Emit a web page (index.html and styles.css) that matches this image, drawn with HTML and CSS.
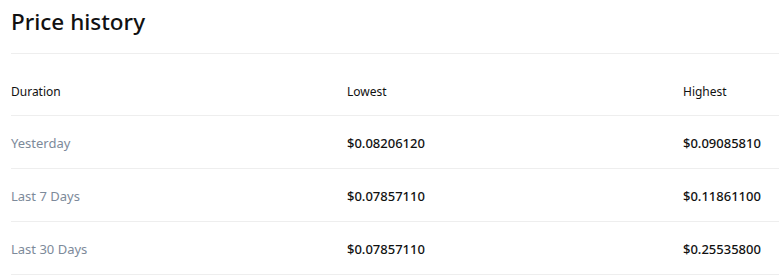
FILE: index.html
```html
<!DOCTYPE html>
<html>
<head>
<meta charset="utf-8">
<link rel="stylesheet" href="styles.css">
</head>
<body>
<section class="card">
  <h2 class="title">Price history</h2>
  <div class="table">
    <div class="row head">
      <div class="cell">Duration</div>
      <div class="cell">Lowest</div>
      <div class="cell">Highest</div>
    </div>
    <div class="row">
      <div class="cell label">Yesterday</div>
      <div class="cell val">$0.08206120</div>
      <div class="cell val">$0.09085810</div>
    </div>
    <div class="row">
      <div class="cell label">Last 7 Days</div>
      <div class="cell val">$0.07857110</div>
      <div class="cell val">$0.11861100</div>
    </div>
    <div class="row">
      <div class="cell label">Last 30 Days</div>
      <div class="cell val">$0.07857110</div>
      <div class="cell val">$0.25535800</div>
    </div>
  </div>
</section>
</body>
</html>
```
FILE: styles.css
```css
html, body {
  margin: 0;
  padding: 0;
  background: #fff;
}
body {
  font-family: "Noto Sans", "Open Sans", sans-serif;
  color: #111;
  overflow: hidden;
}
.card {
  box-sizing: border-box;
  padding-left: 11px;
  width: 100%;
}
.title {
  margin: 0;
  padding-top: 6px;
  padding-bottom: 15px;
  font-size: 22.5px;
  line-height: 32px;
  font-weight: 500;
  color: #111;
  border-bottom: 1px solid #eeeeee;
}
.row {
  display: grid;
  grid-template-columns: 336px 336px 1fr;
  border-bottom: 1px solid #eeeeee;
  padding: 18px 0 16px;
  font-size: 13px;
  line-height: 18px;
}
.row.head {
  padding: 30px 0 15px;
  font-size: 12px;
  line-height: 16px;
  color: #111;
}
.label {
  color: #7d8a9a;
}
.val {
  font-weight: 500;
  color: #111;
}
```
